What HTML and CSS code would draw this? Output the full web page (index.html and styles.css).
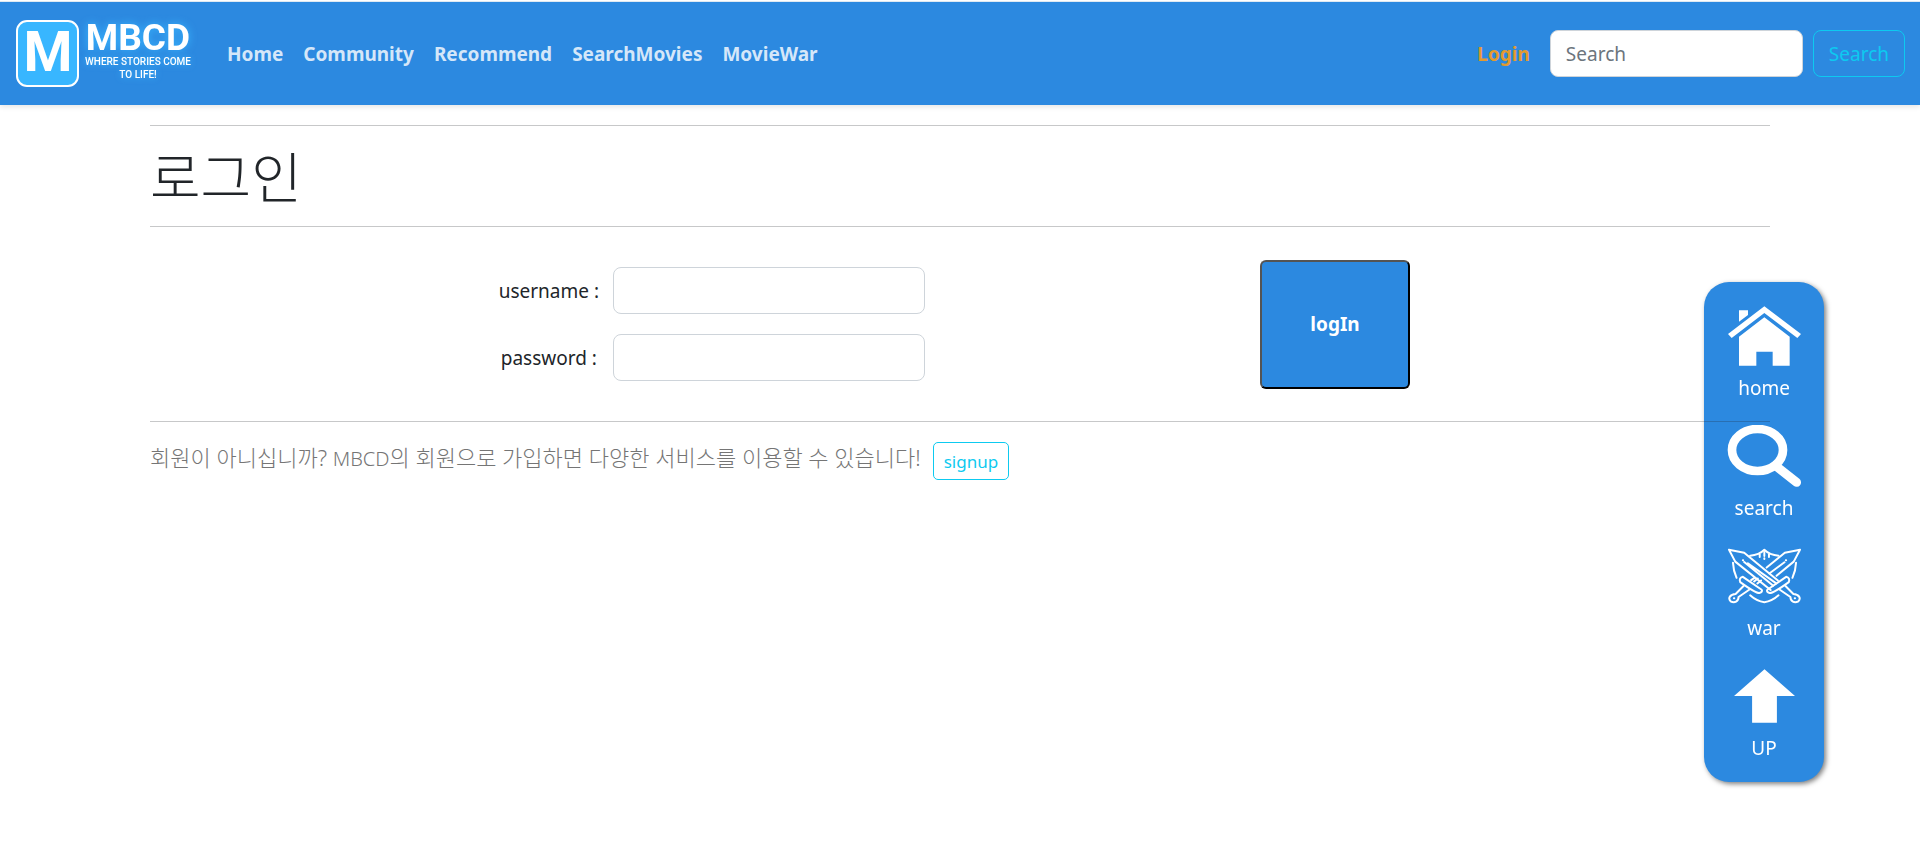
FILE: index.html
```html
<!DOCTYPE html>
<html lang="ko">
<head>
<meta charset="utf-8">
<meta name="viewport" content="width=device-width, initial-scale=1">
<title>MBCD</title>
<link rel="stylesheet" href="styles.css">
</head>
<body>
<nav class="navbar">
  <a class="brand" href="#" aria-label="MBCD">
    <svg class="logo" viewBox="0 0 184 76" role="img" aria-label="MBCD">
      <rect class="logo-box" x="2" y="6" width="61" height="65" rx="10"/>
      <text class="logo-m" x="33" y="56" text-anchor="middle">M</text>
      <text class="logo-name" x="123" y="35" text-anchor="middle">MBCD</text>
      <text class="logo-tag" x="123" y="50" text-anchor="middle">WHERE STORIES COME</text>
      <text class="logo-tag" x="123" y="63" text-anchor="middle">TO LIFE!</text>
    </svg>
  </a>
  <div class="nav-links">
    <a href="#">Home</a>
    <a href="#">Community</a>
    <a href="#">Recommend</a>
    <a href="#">SearchMovies</a>
    <a href="#">MovieWar</a>
  </div>
  <a class="nav-login" href="#">Login</a>
  <form class="nav-search">
    <input class="control" type="search" placeholder="Search" aria-label="Search">
    <button class="btn-outline" type="submit">Search</button>
  </form>
</nav>

<aside class="quick">
  <a href="#">
    <span class="icon"><svg width="73" height="60" viewBox="147 107 219 178" fill="#fff">
      <path d="M147 190 256 107 366 190 355 202 256 127 158 202Z"/>
      <path d="M180 119H207V133L180 153Z"/>
      <path d="M180 198 256 140 332 198V285H281V243H232V285H180Z"/>
    </svg></span>
    home
  </a>
  <a href="#">
    <span class="icon"><svg width="75" height="62" viewBox="140 48 224 186" fill="none" stroke="#fff">
      <ellipse cx="231" cy="123" rx="76.500" ry="63" stroke-width="26"/>
      <path d="M290 174 348 220" stroke-width="27" stroke-linecap="round"/>
    </svg></span>
    search
  </a>
  <a href="#">
    <span class="icon"><svg width="73" height="56" viewBox="137 54 221 167" fill="none" stroke="#fff" stroke-width="6" stroke-linecap="round" stroke-linejoin="round">
      <path d="M140 58 186 67 288 151 M140 58 159 94 266 180 M186 95 274 167 M197 99 283 160"/>
      <path d="M355 58 309 67 254 112 M355 58 336 94 284 137 M308 96 262 130 M237 151 226 160 M227 145 216 154 M217 143 207 150"/>
      <path d="M182 90H183M312 90H313"/>
      <path d="M204 76Q231 74 247 58Q263 74 290 76M233 69V80M247 66V77M247 84V86M261 69V80"/>
      <path d="M152 97Q153 121 163 143M343 97Q342 121 332 143M204 196Q224 214 247 217Q270 214 290 196"/>
      <path d="M174 156Q169 143 182 140L239 179Q243 186 232 189Q221 190 174 156Z"/>
      <path d="M321 156Q326 143 313 140L256 179Q252 186 263 189Q274 190 321 156Z"/>
      <path d="M184 168 160 192C143 193 136 205 145 214C157 221 169 214 169 201L201 179M311 168 335 192C352 193 359 205 350 214C338 221 326 214 326 201L294 179"/>
      <path d="M155 205H156M339 205H340"/>
    </svg></span>
    war
  </a>
  <a href="#">
    <span class="icon"><svg width="61" height="54" viewBox="163 58 182 160" fill="#fff">
      <path d="M254 58 345 138H291V218H217V138H163Z"/>
    </svg></span>
    UP
  </a>
</aside>

<main class="container">
  <hr>
  <h1>로그인</h1>
  <hr>
  <form class="login">
    <div class="fields">
      <label for="username">username :</label>
      <input class="control" id="username" type="text">
      <label for="password">password :</label>
      <input class="control" id="password" type="password">
    </div>
    <div class="submit"><button class="btn-login" type="submit">logIn</button></div>
  </form>
  <hr>
  <div class="join">
    <p>회원이 아니십니까? <span>MBCD</span>의 회원으로 가입하면 다양한 서비스를 이용할 수 있습니다!</p>
    <a class="btn-outline btn-small" href="#">signup</a>
  </div>
</main>
</body>
</html>
```
FILE: styles.css
```css
* { box-sizing: border-box; }

body {
  margin: 0;
  border-top: 1px solid #fff;
  font-family: "Noto Sans", "Noto Sans CJK KR", sans-serif;
  font-size: 19px;
  line-height: 30px;
  color: #212529;
  background: #fff;
}

a { color: inherit; text-decoration: none; }

.navbar {
  display: flex;
  align-items: center;
  padding: 13px 15px 14px;
  border-top: 1px solid #dfe9f2;
  background: #2c89e0;
  box-shadow: 0 2px 5px rgba(0, 0, 0, 0.1);
}

.brand { display: flex; margin-right: 18px; }
.logo { width: 184px; height: 76px; overflow: visible; font-family: Roboto, sans-serif; fill: #fff; }
.logo-box { fill: #38b6ff; stroke: #fff; stroke-width: 2; }
.logo-m { font-size: 56px; font-weight: 700; }
.logo-name { font-size: 37px; font-weight: 700; filter: drop-shadow(0 0 4px #38b6ff); }
.logo-tag { font-size: 10px; font-weight: 500; filter: drop-shadow(0 0 3px #38b6ff); }

.nav-links { display: flex; flex: 1; font-weight: 700; color: #d5e7f9; }
.nav-links a { padding: 11px 10px 9px; }
.nav-login { padding: 11px 10px 9px; margin-right: 10px; font-weight: 700; color: #e39a2e; }
.nav-search { display: flex; gap: 10px; }
.nav-search .control { width: 253px; }

.control {
  height: 47px;
  padding: 8px 15px 6px;
  border: 1px solid #ced4da;
  border-radius: 8px;
  background: #fff;
  font: inherit;
  color: inherit;
}
.control::placeholder { color: #6c757d; opacity: 1; }

.btn-outline {
  padding: 8px 15px 6px;
  border: 1px solid #0dcaf0;
  border-radius: 8px;
  background: none;
  font: inherit;
  color: #0dcaf0;
}
.btn-small { padding: 6px 10px 4px; border-radius: 5px; font-size: 17px; line-height: 26px; }

.quick {
  position: fixed;
  top: 282px;
  right: 5%;
  width: 120px;
  padding: 11px 0 9px;
  border-radius: 25px;
  background: #2c89e0;
  box-shadow: 2px 2px 5px rgba(0, 0, 0, 0.5);
  color: #fff;
}
.quick a { display: flex; flex-direction: column; align-items: center; gap: 4px; padding: 10px 0; }
.icon { display: flex; align-items: center; height: 66px; }

.container { max-width: 1650px; margin: 0 auto; padding: 0 15px; }
hr { margin: 20px 0; border: 0; border-top: 1px solid #212529; opacity: 0.25; }
h1 { margin: 0; padding-top: 2px; font-size: 55px; font-weight: 300; line-height: 58px; }

.login { display: grid; grid-template-columns: 1fr 1fr; align-items: center; }
.fields {
  display: grid;
  grid-template-columns: auto 312px;
  justify-content: end;
  align-items: center;
  gap: 20px 14px;
  padding: 20px 35px 20px 0;
  text-align: center;
}
.submit { display: flex; justify-content: center; padding-right: 60px; }
.btn-login {
  width: 150px;
  height: 129px;
  border: 2px outset #000;
  border-radius: 6px;
  background: #2c89e0;
  font: inherit;
  font-weight: 700;
  color: #fff;
}

.join { display: flex; align-items: flex-start; gap: 12px; }
.join p { margin: 0; font-size: 22px; font-weight: 300; color: #757575; }
.join span { font-size: 20px; }
```
